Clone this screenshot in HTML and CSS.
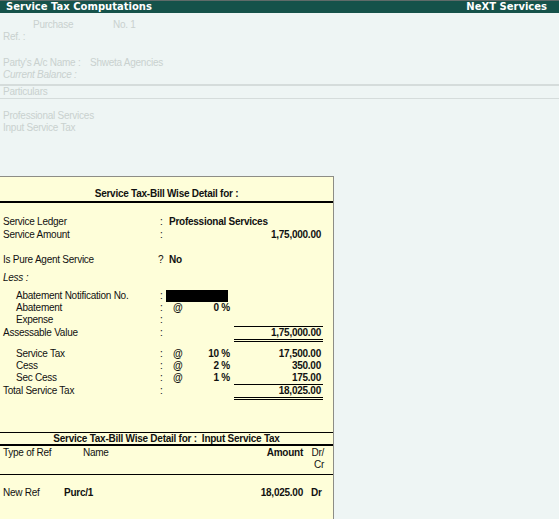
FILE: index.html
```html
<!DOCTYPE html>
<html lang="en">
<head>
    <meta charset="UTF-8">
    <title>Service Tax Computations</title>
    <link rel="stylesheet" href="styles.css">
</head>
<body>
    <div class="titlebar">
        <span>Service Tax Computations</span>
        <span>NeXT Services</span>
    </div>

    <div class="voucher">
        <div class="v-row v-first">
            <span class="v-type">Purchase</span>
            <span class="v-no">No. 1</span>
        </div>
        <div class="v-row">Ref. :</div>
        <div class="v-row v-party">
            <span class="v-label">Party's A/c Name :</span>
            <span>Shweta Agencies</span>
        </div>
        <div class="v-row v-italic">Current Balance :</div>
        <div class="v-particulars">Particulars</div>
        <div class="v-row v-ledger">Professional Services</div>
        <div class="v-row">Input Service Tax</div>
    </div>

    <div class="bill-panel">
        <div class="panel-head">Service Tax-Bill Wise Detail for :</div>

        <div class="row first">
            <span class="label">Service Ledger</span>
            <span class="colon">:</span>
            <span class="wide strong">Professional Services</span>
        </div>
        <div class="row gap1">
            <span class="label">Service Amount</span>
            <span class="colon">:</span>
            <span class="mid"></span>
            <span class="amount strong">1,75,000.00</span>
        </div>

        <div class="row gap-pure">
            <span class="label">Is Pure Agent Service</span>
            <span class="colon q">?</span>
            <span class="wide strong">No</span>
        </div>

        <div class="row gap6">
            <span class="label italic">Less :</span>
        </div>
        <div class="row gap6">
            <span class="label sub">Abatement Notification No.</span>
            <span class="colon">:</span>
            <span class="mid blackout"></span>
        </div>
        <div class="row">
            <span class="label sub">Abatement</span>
            <span class="colon">:</span>
            <span class="mid"><b>@</b><b>0 %</b></span>
        </div>
        <div class="row">
            <span class="label sub">Expense</span>
            <span class="colon">:</span>
        </div>
        <div class="row totalled">
            <span class="label">Assessable Value</span>
            <span class="colon">:</span>
            <span class="mid"></span>
            <span class="amount strong">1,75,000.00</span>
        </div>

        <div class="row gap-tax">
            <span class="label sub">Service Tax</span>
            <span class="colon">:</span>
            <span class="mid"><b>@</b><b>10 %</b></span>
            <span class="amount strong">17,500.00</span>
        </div>
        <div class="row">
            <span class="label sub">Cess</span>
            <span class="colon">:</span>
            <span class="mid"><b>@</b><b>2 %</b></span>
            <span class="amount strong">350.00</span>
        </div>
        <div class="row">
            <span class="label sub">Sec Cess</span>
            <span class="colon">:</span>
            <span class="mid"><b>@</b><b>1 %</b></span>
            <span class="amount strong">175.00</span>
        </div>
        <div class="row totalled">
            <span class="label">Total Service Tax</span>
            <span class="colon">:</span>
            <span class="mid"></span>
            <span class="amount strong">18,025.00</span>
        </div>

        <div class="bills">
            <div class="bills-head">Service Tax-Bill Wise Detail for : &nbsp;Input Service Tax</div>
            <div class="bills-cols">
                <span class="c-type">Type of Ref</span>
                <span class="c-name">Name</span>
                <span class="c-amount strong">Amount</span>
                <span class="c-drcr">Dr/<br>Cr</span>
            </div>
            <div class="bill-row">
                <span class="c-type">New Ref</span>
                <span class="b-name strong">Purc/1</span>
                <span class="c-amount strong">18,025.00</span>
                <span class="b-drcr strong">Dr</span>
            </div>
        </div>
    </div>
</body>
</html>
```

FILE: styles.css
```css
:root {
    --teal: #15524a;
    --fond: #eef5f4;
    --fade: #c9d1cf;
    --creme: #fefed9;
    --encre: #111;
}

* {
    margin: 0;
    padding: 0;
    box-sizing: border-box;
}

body {
    background-color: var(--fond);
    font-family: "Liberation Sans", Arial, sans-serif;
    font-size: 10px;
    letter-spacing: -0.25px;
    color: var(--encre);
    width: 559px;
    height: 519px;
    overflow: hidden;
}

.titlebar {
    height: 13px;
    background-color: var(--teal);
    border-top: 1px solid #5f6b69;
    color: #fff;
    font-family: "DejaVu Sans", Verdana, sans-serif;
    font-weight: bold;
    font-size: 10px;
    letter-spacing: 0;
    line-height: 12px;
    display: flex;
    justify-content: space-between;
    padding: 0 12px 0 6px;
}

/* voucher behind the popup, all faded */
.voucher {
    height: 163px;
    padding-top: 6px;
    color: var(--fade);
}

.v-row {
    height: 12px;
    line-height: 12px;
    padding-left: 3px;
}

.v-first {
    display: flex;
}

.v-type {
    margin-left: 30px;
    width: 80px;
}

.v-party {
    margin-top: 14px;
    display: flex;
}

.v-label {
    width: 87px;
}

.v-italic {
    font-style: italic;
}

.v-particulars {
    margin-top: 3px;
    border-top: 2px solid #d5dcdb;
    border-bottom: 1px solid #d5dcdb;
    height: 15px;
    line-height: 11px;
    padding-left: 3px;
}

.v-ledger {
    margin-top: 11px;
}

/* popup */
.bill-panel {
    width: 334px;
    height: 343px;
    background-color: var(--creme);
    border-top: 1px solid #8d8d86;
    border-right: 1px solid #8d8d86;
}

.panel-head {
    height: 26px;
    padding-top: 11px;
    line-height: 12px;
    text-align: center;
    font-weight: bold;
    border-bottom: 2px solid #000;
}

.row {
    display: grid;
    grid-template-columns: 160px 6px 68px 89px;
    line-height: 12px;
    min-height: 12px;
}

.row.first { margin-top: 13px; }
.row.gap1 { margin-top: 1px; }
.row.gap-pure { margin-top: 13px; }
.row.gap6 { margin-top: 6px; }
.row.gap-tax { margin-top: 6px; }

.label {
    padding-left: 3px;
}

.label.sub {
    padding-left: 16px;
}

.italic {
    font-style: italic;
}

.colon.q {
    margin-left: -2px;
}

.strong,
.mid b {
    font-weight: bold;
}

.wide {
    grid-column: 3 / 5;
    padding-left: 3px;
}

.mid {
    display: flex;
    justify-content: space-between;
    padding: 0 4px 0 7px;
}

.blackout {
    background-color: #000;
    width: 62px;
}

.amount {
    text-align: right;
    padding-right: 2px;
}

.totalled .label,
.totalled .colon {
    padding-top: 1px;
}

.totalled .amount {
    border-top: 1px solid #000;
    border-bottom: 3px double #000;
}

.bills {
    margin-top: 32px;
}

.bills-head {
    border-top: 1px solid #000;
    border-bottom: 2px solid #000;
    height: 14px;
    line-height: 11px;
    text-align: center;
    font-weight: bold;
}

.bills-cols,
.bill-row {
    display: grid;
    grid-template-columns: 80px 1fr 95px 25px;
    line-height: 12px;
}

.bills-cols {
    padding-top: 1px;
    height: 29px;
    border-bottom: 1px solid #000;
}

.bill-row {
    margin-top: 12px;
    grid-template-columns: 61px 1fr 95px 25px;
}

.c-type {
    padding-left: 3px;
}

.c-name,
.b-name {
    padding-left: 3px;
}

.c-amount {
    text-align: right;
    padding-right: 5px;
}

.c-drcr {
    text-align: right;
    padding-right: 9px;
}

.b-drcr {
    padding-left: 3px;
}
```
